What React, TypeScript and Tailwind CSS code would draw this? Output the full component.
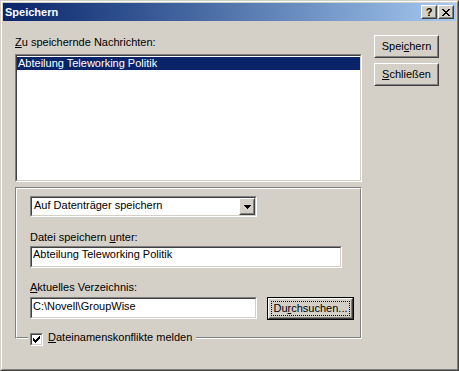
import React from "react";

function Raised({ className = "", children }: { className?: string; children?: React.ReactNode }) {
  return (
    <div className={`border border-t-white border-l-white border-r-[#404040] border-b-[#404040] bg-[#d4d0c8] ${className}`}>
      <div className="flex h-full w-full items-center justify-center border border-t-[#d4d0c8] border-l-[#d4d0c8] border-r-[#808080] border-b-[#808080]">
        {children}
      </div>
    </div>
  );
}

function Sunken({ className = "", innerClassName = "", children }: { className?: string; innerClassName?: string; children?: React.ReactNode }) {
  return (
    <div className={`border border-t-[#808080] border-l-[#808080] border-r-white border-b-white ${className}`}>
      <div className={`h-full w-full border border-t-[#404040] border-l-[#404040] border-r-[#d4d0c8] border-b-[#d4d0c8] bg-white ${innerClassName}`}>
        {children}
      </div>
    </div>
  );
}

function CloseGlyph() {
  const px: [number, number][] = [
    [0, 0], [1, 0], [6, 0], [7, 0],
    [1, 1], [2, 1], [5, 1], [6, 1],
    [2, 2], [3, 2], [4, 2], [5, 2],
    [3, 3], [4, 3],
    [2, 4], [3, 4], [4, 4], [5, 4],
    [1, 5], [2, 5], [5, 5], [6, 5],
    [0, 6], [1, 6], [6, 6], [7, 6],
  ];
  return (
    <svg width="8" height="7" viewBox="0 0 8 7" shapeRendering="crispEdges">
      {px.map(([x, y], i) => (
        <rect key={i} x={x} y={y} width="1" height="1" fill="#000" />
      ))}
    </svg>
  );
}

function CheckGlyph() {
  const px: [number, number][] = [
    [6, 0],
    [5, 1], [6, 1],
    [0, 2], [4, 2], [5, 2], [6, 2],
    [0, 3], [1, 3], [3, 3], [4, 3], [5, 3],
    [0, 4], [1, 4], [2, 4], [3, 4], [4, 4],
    [1, 5], [2, 5], [3, 5],
    [2, 6],
  ];
  return (
    <svg width="7" height="7" viewBox="0 0 7 7" shapeRendering="crispEdges">
      {px.map(([x, y], i) => (
        <rect key={i} x={x} y={y} width="1" height="1" fill="#000" />
      ))}
    </svg>
  );
}

function ArrowGlyph() {
  return (
    <svg width="7" height="4" viewBox="0 0 7 4" shapeRendering="crispEdges">
      <rect x="0" y="0" width="7" height="1" fill="#000" />
      <rect x="1" y="1" width="5" height="1" fill="#000" />
      <rect x="2" y="2" width="3" height="1" fill="#000" />
      <rect x="3" y="3" width="1" height="1" fill="#000" />
    </svg>
  );
}

export default function App() {
  return (
    <div className="h-[371px] w-[459px] bg-[#d4d0c8] font-['Liberation_Sans',Arial,sans-serif] text-[11px] leading-[13px] text-black">
      <div className="h-full w-full border border-t-[#d4d0c8] border-l-[#d4d0c8] border-r-[#404040] border-b-[#404040]">
        <div className="flex h-full w-full flex-col border border-t-white border-l-white border-r-[#808080] border-b-[#808080] p-[1px]">
          {/* Title bar */}
          <div className="flex h-[18px] shrink-0 items-center bg-linear-to-r from-[#0a246a] to-[#a6caf0] pl-[2px] pr-[2px]">
            <span className="flex-1 font-bold text-white">Speichern</span>
            <Raised className="h-[14px] w-[16px]">
              <span className="text-[11px] font-bold leading-[10px]">?</span>
            </Raised>
            <Raised className="ml-[1px] h-[14px] w-[16px]">
              <CloseGlyph />
            </Raised>
          </div>

          {/* Body */}
          <div className="flex flex-1">
            {/* Left column */}
            <div className="ml-[12px] w-[347px] pt-[15px]">
              <div>
                <u>Z</u>u speichernde Nachrichten:
              </div>
              <Sunken className="mt-[5px] h-[128px] w-[347px]" innerClassName="pt-[1px]">
                <div className="h-[13px] bg-[#0a246a] pl-[1px] text-white">Abteilung Teleworking Politik</div>
              </Sunken>

              {/* Group box */}
              <div className="relative mt-[5px] h-[152px] w-[347px] border border-t-[#808080] border-l-[#808080] border-r-white border-b-white">
                <div className="h-full w-full border border-t-white border-l-white border-r-[#808080] border-b-[#808080] pl-[13px] pt-[7px]">
                  <Sunken className="h-[21px] w-[227px]" innerClassName="flex">
                    <div className="flex-1 pl-[2px] pt-[1px]">Auf Datenträger speichern</div>
                    <Raised className="h-[17px] w-[16px]">
                      <ArrowGlyph />
                    </Raised>
                  </Sunken>

                  <div className="mt-[14px]">
                    Datei speichern <u>u</u>nter:
                  </div>
                  <Sunken className="mt-[2px] h-[22px] w-[312px]" innerClassName="pl-[1px]">
                    Abteilung Teleworking Politik
                  </Sunken>

                  <div className="mt-[13px]">
                    <u>A</u>ktuelles Verzeichnis:
                  </div>
                  <div className="mt-[3px] flex items-start gap-[10px]">
                    <Sunken className="h-[22px] w-[227px]" innerClassName="pl-[1px] pt-[1px]">
                      C:\Novell\GroupWise
                    </Sunken>
                    <div className="h-[23px] w-[87px] border border-black">
                      <Raised className="h-full w-full">
                        <div className="flex h-[15px] w-[79px] items-center justify-center border border-dotted border-black">
                          Du<u>r</u>chsuchen...
                        </div>
                      </Raised>
                    </div>
                  </div>
                </div>

                {/* Checkbox sitting on the bottom edge of the group */}
                <div className="absolute left-[12px] top-[145px] flex h-[13px] items-start bg-[#d4d0c8] pl-[2px] pr-[4px]">
                  <Sunken className="h-[13px] w-[13px]" innerClassName="flex items-center justify-center">
                    <CheckGlyph />
                  </Sunken>
                  <span className="-mt-[2px] ml-[5px] leading-[13px]">
                    <u>D</u>ateinamenskonflikte melden
                  </span>
                </div>
              </div>
            </div>

            {/* Right column */}
            <div className="ml-[12px] flex flex-col gap-[5px] pt-[14px]">
              <Raised className="h-[23px] w-[65px]">
                <span>
                  Spei<u>c</u>hern
                </span>
              </Raised>
              <Raised className="h-[23px] w-[65px]">
                <span>
                  <u>S</u>chließen
                </span>
              </Raised>
            </div>
          </div>
        </div>
      </div>
    </div>
  );
}
